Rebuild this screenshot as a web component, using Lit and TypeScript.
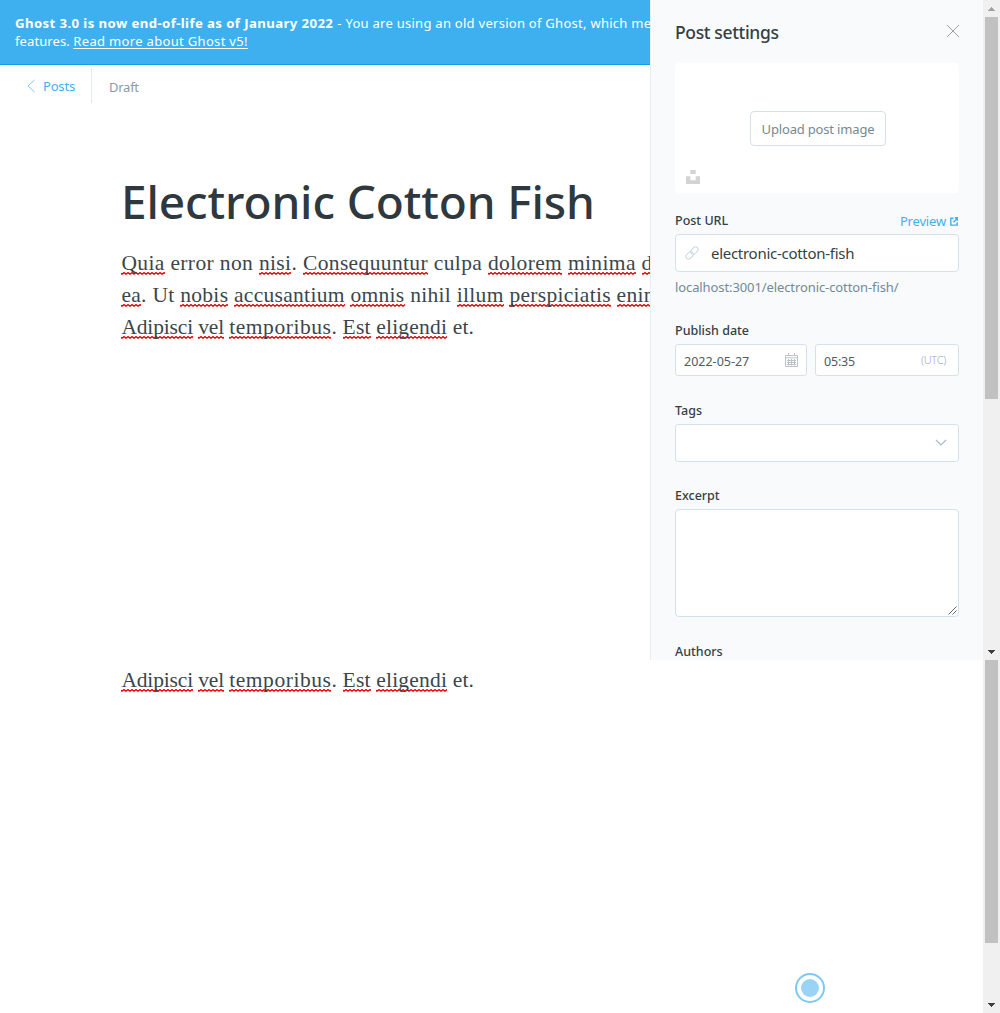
import { LitElement, html, css } from "lit";
import { customElement, property } from "lit/decorators.js";
import { classMap } from "lit/directives/class-map.js";

/** Words wrapped in underscores are marked by the spell checker. */
const spell = (text: string) =>
  text.split("_").map((part, i) => (i % 2 ? html`<span class="typo">${part}</span>` : part));

const lastLine = () => html`
  <span class="line l3"><span class="tight">${spell("_Adipisci_ _vel_ ")}</span><span class="wide">${spell("_temporibus_")}</span>${spell(". _Est_ _eligendi_ et.")}</span>
`;

@customElement("scroll-bar")
class ScrollBar extends LitElement {
  @property({ type: Boolean }) top = false;
  static styles = css`
    :host { display: flex; flex-direction: column; align-items: center; width: 17px; height: 100%; background: #f0f0f0; }
    .cap { height: 17px; display: flex; align-items: center; justify-content: center; flex: none; }
    .thumb { width: 13px; background: #c1c1c1; }
    .long { height: 382px; }
    .short { height: 283px; }
    .space { flex: 1; }
    svg { display: block; }
  `;
  render() {
    return html`
      ${this.top ? html`<div class="cap"><svg width="7" height="4" fill="#a3a3a3"><path d="M3 0h1v1h1v1h1v1h1v1H0V3h1V2h1V1h1z" /></svg></div>` : ""}
      <div class=${classMap({ thumb: true, long: this.top, short: !this.top })}></div>
      <div class="space"></div>
      <div class="cap"><svg width="7" height="4" fill="#404040"><path d="M0 0h7v1H6v1H5v1H4v1H3V3H2V2H1V1H0z" /></svg></div>
    `;
  }
}

@customElement("post-settings")
class PostSettings extends LitElement {
  static styles = css`
    * { box-sizing: border-box; }
    :host { display: block; background: #f9fafc; border-left: 1px solid #e3eef8; padding: 0 24px; overflow: hidden;
      font: 13px/18px "Noto Sans", "Open Sans", sans-serif; color: #343f44; white-space: nowrap; }
    svg { display: block; flex: none; }
    .head { display: flex; justify-content: space-between; height: 63px; padding: 20px 0 0; }
    .head h2 { margin: 0; font-size: 17.5px; line-height: 25px; font-weight: 500; letter-spacing: -0.35px; }
    .head svg { margin: 4px -1px 0 0; }
    .drop { height: 130px; background: #fff; border-radius: 4px; display: grid; grid-template-rows: 48px 35px 1fr; justify-items: center; }
    .upload { grid-row: 2; width: 136px; height: 35px; margin-left: 2px; border: 1px solid #d3e0e7; border-radius: 4px; color: #738a94;
      display: flex; align-items: center; justify-content: center; letter-spacing: -0.17px; padding-top: 1px; }
    .splash { grid-row: 3; justify-self: start; margin: 24px 0 0 11px; }
    .row { display: flex; justify-content: space-between; align-items: center; margin-top: 18px; }
    .label { font-weight: 500; font-size: 12.5px; line-height: 18px; height: 23px; padding-top: 1px; }
    .preview { display: flex; align-items: center; gap: 4px; color: #3eb0ef; letter-spacing: -0.17px; height: 23px; padding: 0 1px 3px 0; }
    .box { background: #fff; border: 1px solid #d3e2ea; border-radius: 4px; display: flex; align-items: center; }
    .url { height: 38px; padding-left: 8px; gap: 11px; font-size: 15px; letter-spacing: -0.28px; }
    .hint { color: #738a94; letter-spacing: -0.1px; margin-top: 6px; height: 43px; }
    .dates { display: grid; grid-template-columns: 132px 144px; gap: 8px; }
    .date { height: 32px; padding: 3px 8px 0 8px; justify-content: space-between; font-size: 12.5px; color: #4e5c64; border-radius: 3px; }
    .date svg { margin: -4px 0 0; }
    .time { letter-spacing: -0.2px; padding-right: 12px; }
    .utc { font-size: 11px; font-weight: 300; letter-spacing: -0.3px; color: #9cabb3; margin-top: -3px; }
    .tags { height: 38px; justify-content: flex-end; padding-right: 11px; border-radius: 3px; }
    .excerpt { height: 108px; align-items: flex-end; justify-content: flex-end; padding: 0 1px 1px 0; }
    .field { margin-top: 25px; }
    .near { margin-top: 24px; }
  `;
  render() {
    return html`
      <div class="head">
        <h2>Post settings</h2>
        <svg width="14" height="14" stroke="#8b989f" fill="none" stroke-width="0.9"><path d="M1 1l12 12M13 1L1 13" /></svg>
      </div>
      <div class="drop">
        <div class="upload">Upload post image</div>
        <svg class="splash" width="14" height="14" fill="#d3d3d3"><path d="M4.300 0h5.400v4H4.300zM0 6.200h4.300v4h5.400v-4H14V14H0z" /></svg>
      </div>
      <div class="row">
        <div class="label">Post URL</div>
        <div class="preview">Preview
          <svg width="8" height="9" fill="none" stroke="#3eb0ef" stroke-width="1.400"><path d="M3.500 1.300H.8v6.800h6.400V5.300M3.500 5.200L7 1.500M4.800.8h2.500v2.900" /></svg>
        </div>
      </div>
      <div class="box url">
        <svg width="16" height="16" viewBox="0 0 16 16" fill="none" stroke="#c9d8e0"><g transform="rotate(-45 8 8)"><rect x="0.5" y="5.4" width="8.2" height="5.2" rx="2.6" /><rect x="7.3" y="5.4" width="8.2" height="5.2" rx="2.6" /></g></svg>
        <span>electronic-cotton-fish</span>
      </div>
      <div class="hint">localhost:3001/electronic-cotton-fish/</div>
      <div class="label">Publish date</div>
      <div class="dates">
        <div class="box date">2022-05-27
          <svg width="13" height="14" fill="none" stroke="#bcc4c8"><path d="M.5 2.500h12v11H.5zM.5 4.800h12M3.500 0v3M9.500 0v3M2 7.500h9M2 9.500h9M2 11.500h9M3.500 6v6.500M6.500 6v6.500M9.500 6v6.500" /></svg>
        </div>
        <div class="box date time">05:35<span class="utc">(UTC)</span></div>
      </div>
      <div class="label field">Tags</div>
      <div class="box tags">
        <svg width="12" height="8" fill="none" stroke="#a9bac4" stroke-width="1.200"><path d="M1 1l5 5 5-5" /></svg>
      </div>
      <div class="label field near">Excerpt</div>
      <div class="box excerpt">
        <svg width="9" height="9" stroke="#555" fill="none" stroke-width="0.9"><path d="M.5 8.500l8-8M4.500 8.500l4-4" /></svg>
      </div>
      <div class="label field">Authors</div>
    `;
  }
}

@customElement("app-root")
class AppRoot extends LitElement {
  static styles = css`
    * { box-sizing: border-box; }
    :host { display: grid; grid-template-columns: 650px 333px 17px; grid-template-rows: 660px 353px; width: 1000px; height: 1013px; background: #fff;
      font: 13px/18px "Noto Sans", "Open Sans", sans-serif; overflow: hidden; }
    .main { overflow: hidden; white-space: nowrap; }
    .banner { height: 65px; background: #3eb0ef; border-bottom: 1px solid #1a9be3; color: #fff; padding: 14px 15px; }
    .line { display: block; }
    .b { font-weight: 700; letter-spacing: 0.4px; font-size: 13.2px; }
    .r { letter-spacing: 0.27px; margin-left: 4px; }
    .s { letter-spacing: 0.1px; }
    .link { text-decoration: underline; letter-spacing: 0.325px; text-underline-offset: 2px; }
    .nav { display: flex; height: 43px; align-items: center; }
    .back { display: flex; align-items: center; gap: 8px; color: #3eb0ef; width: 92px; height: 35px; margin-top: -2px; padding: 0 0 0 27px; border-right: 1px solid #e3ebf1; letter-spacing: -0.18px; }
    .draft { color: #8a9ba5; margin-left: 17px; letter-spacing: -0.25px; }
    h1 { margin: 61px 0 0 121px; font-size: 46px; line-height: 64px; height: 78px; font-weight: 500; letter-spacing: -0.13px; color: #2f383d; }
    .text { margin-left: 121.4px; font: 21.5px/32px "Liberation Serif", serif; color: #3b464c; }
    .l1 { letter-spacing: 0.37px; }
    .l2 { letter-spacing: 0.3px; }
    .l3 { letter-spacing: 0.2px; }
    .tight { letter-spacing: -0.16px; }
    .wide { letter-spacing: 0.55px; }
    .typo { background: url("data:image/svg+xml,%3Csvg xmlns='http://www.w3.org/2000/svg' width='4' height='3'%3E%3Cpath d='M-1 .5L1 2.3L3 .5L5 2.3' fill='none' stroke='%23f00000' stroke-width='1.2'/%3E%3C/svg%3E") 0 100% repeat-x; }
    .rest { grid-column: 1 / 3; position: relative; padding-top: 4px; white-space: nowrap; }
    .dot { position: absolute; left: 795px; top: 313px; }
  `;
  render() {
    return html`
      <div class="main">
        <div class="banner">
          <span class="line"><span class="b">Ghost 3.0 is now end-of-life as of January 2022</span><span class="r">- You are using an old version of Ghost, which means</span></span>
          <span class="line"><span class="s">features. </span><span class="link">Read more about Ghost v5!</span></span>
        </div>
        <div class="nav">
          <div class="back"><svg width="8" height="14" fill="none" stroke="#7cc8f3"><path d="M7.500 1L1 7l6.500 6" /></svg>Posts</div>
          <div class="draft">Draft</div>
        </div>
        <h1>Electronic Cotton Fish</h1>
        <div class="text">
          <span class="line l1">${spell("_Quia_ error non _nisi_. _Consequuntur_ culpa _dolorem_ _minima_ _dolorem_")}</span>
          <span class="line l2">${spell("_ea_. Ut _nobis_ _accusantium_ _omnis_ nihil _illum_ _perspiciatis_ _enim_")}</span>
          ${lastLine()}
        </div>
      </div>
      <post-settings></post-settings>
      <scroll-bar top></scroll-bar>
      <div class="rest">
        <div class="text">${lastLine()}</div>
        <svg class="dot" width="30" height="30" fill="none"><circle cx="15" cy="15" r="14" stroke="#7cc9f3" stroke-width="2" /><circle cx="15" cy="15" r="9" fill="#99d4f7" /></svg>
      </div>
      <scroll-bar></scroll-bar>
    `;
  }
}
